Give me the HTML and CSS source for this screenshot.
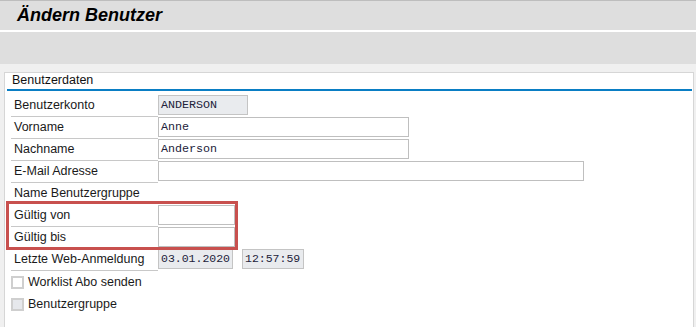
FILE: index.html
```html
<!DOCTYPE html>
<html lang="de">
<head>
<meta charset="utf-8">
<title>Ändern Benutzer</title>
<link rel="stylesheet" href="styles.css">
</head>
<body>
<header class="titlebar"><h1 class="title">Ändern Benutzer</h1></header>
<div class="toolbar"></div>
<div class="strip"></div>
<section class="panel">
  <div class="panel-head">Benutzerdaten</div>
  <div class="form">
    <div class="row"><span class="label">Benutzerkonto</span><span class="field ro w90">ANDERSON</span></div>
    <div class="row"><span class="label">Vorname</span><span class="field w251">Anne</span></div>
    <div class="row"><span class="label">Nachname</span><span class="field w251">Anderson</span></div>
    <div class="row"><span class="label">E-Mail Adresse</span><span class="field w426"></span></div>
    <div class="row"><span class="label plain">Name Benutzergruppe</span></div>
    <div class="row"><span class="label">Gültig von</span><span class="field w77"></span></div>
    <div class="row"><span class="label">Gültig bis</span><span class="field w77"></span></div>
    <div class="row"><span class="label">Letzte Web-Anmeldung</span><span class="field ro w75 date">03.01.2020</span><span class="field ro w62 time">12:57:59</span></div>
    <div class="row check"><span class="box"></span><span class="ctext">Worklist Abo senden</span></div>
    <div class="row check"><span class="box dis"></span><span class="ctext">Benutzergruppe</span></div>
    <div class="highlight"></div>
  </div>
</section>
</body>
</html>
```
FILE: styles.css
```css
html, body {
  margin: 0;
  padding: 0;
}
body {
  width: 696px;
  height: 327px;
  overflow: hidden;
  background: #f0f0f0;
  font-family: "Liberation Sans", Arial, sans-serif;
  font-size: 12.5px;
  color: #1a1a1a;
}
.titlebar {
  height: 29px;
  border-top: 1px solid #bdbdbd;
  background: #dedede;
  border-bottom: 2px solid #ffffff;
  padding-left: 17px;
  box-sizing: content-box;
}
.title {
  margin: 0;
  font-size: 18px;
  font-weight: bold;
  font-style: italic;
  line-height: 29px;
  color: #000;
}
.toolbar {
  height: 32px;
  background: #dedede;
}
.strip {
  height: 8px;
  background: #f0f0f0;
}
.panel {
  margin: 0 2px 0 4px;
  height: 255px;
  background: #fff;
  border: 1px solid #d6d6d6;
  border-bottom: none;
}
.panel-head {
  height: 16px;
  line-height: 15px;
  padding-left: 7px;
  margin: 0 1px 0 2px;
  border-bottom: 2px solid #0a7ec4;
  padding-left: 5px;
  color: #111;
}
.form {
  position: relative;
  padding: 4px 0 0 6px;
}
.row {
  display: flex;
  align-items: flex-start;
  height: 22px;
}
.label {
  width: 144px;
  height: 21px;
  line-height: 21px;
  padding-left: 3px;
  border-bottom: 1px solid #c8c8c8;
}
.label.plain {
  border-bottom-color: transparent;
}
.field {
  box-sizing: border-box;
  height: 20px;
  border: 1px solid #bfbfbf;
  background: #fff;
  font-family: "Liberation Mono", "Courier New", monospace;
  font-size: 11.7px;
  line-height: 18px;
  padding-left: 2px;
  color: #22223a;
}
.field.ro {
  background: #e9ebee;
  border-color: #c4c4c4;
}
.w90 { width: 90px; }
.w251 { width: 251px; }
.w426 { width: 426px; }
.w77 { width: 77px; }
.w75 { width: 75px; }
.w62 { width: 62px; margin-left: 9px; }
.date, .time {
  font-size: 11.5px;
  letter-spacing: 0;
}
.row.check {
  align-items: center;
}
.box {
  box-sizing: border-box;
  width: 13px;
  height: 13px;
  border: 2px solid #cfcfcf;
  background: #fff;
  margin-right: 4px;
}
.box.dis {
  background: #e6e8ec;
}
.ctext {
  line-height: 22px;
}
.highlight {
  position: absolute;
  left: 1px;
  top: 110px;
  width: 226px;
  height: 43px;
  border: 3px solid #c8504e;
  pointer-events: none;
}
```
